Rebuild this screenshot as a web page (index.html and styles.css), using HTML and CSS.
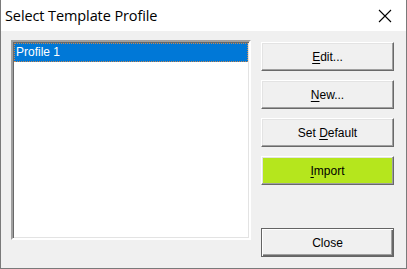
FILE: index.html
```html
<!DOCTYPE html>
<html>
<head>
<meta charset="utf-8">
<link rel="stylesheet" href="styles.css">
</head>
<body>
<div class="window">
  <div class="titlebar">
    <span class="title">Select Template Profile</span>
    <svg class="close-x" width="14" height="14" viewBox="0 0 14 14"><path d="M1 1 L13 13 M13 1 L1 13" stroke="#000" stroke-width="1.1" fill="none"/></svg>
  </div>
  <div class="client">
    <div class="listbox">
      <div class="item selected">Profile 1</div>
    </div>
    <div class="buttons">
      <button class="btn"><u>E</u>dit...</button>
      <button class="btn"><u>N</u>ew...</button>
      <button class="btn">Set <u>D</u>efault</button>
      <button class="btn import"><u>I</u>mport</button>
      <button class="btn default close">Close</button>
    </div>
  </div>
</div>
</body>
</html>
```
FILE: styles.css
```css
html, body {
  margin: 0;
  padding: 0;
  background: #f0f0f0;
}
.window {
  width: 407px;
  height: 269px;
  box-sizing: border-box;
  border: 1px solid #7a7a7a;
  border-top: none;
  background: #f0f0f0;
  display: flex;
  flex-direction: column;
}
.titlebar {
  height: 31px;
  background: #fff;
  display: flex;
  align-items: center;
  justify-content: space-between;
  padding: 0 14px 0 4px;
  flex: none;
}
.title {
  font-family: "Open Sans", "Noto Sans", sans-serif;
  font-size: 14.5px;
  color: #000;
  letter-spacing: -0.1px;
  margin-top: -1px;
}
.close-x {
  display: block;
  margin-top: 1px;
}
.client {
  display: flex;
  padding: 9px 11px 0 10px;
  gap: 10px;
}
.listbox {
  width: 240px;
  height: 200px;
  box-sizing: border-box;
  background: #fff;
  border-style: solid;
  border-width: 2px;
  border-color: #a0a0a0 #fff #fff #a0a0a0;
  box-shadow: inset 1px 1px 0 #696969, inset -1px -1px 0 #e3e3e3;
  padding: 1px;
}
.item {
  height: 19px;
  box-sizing: border-box;
  font-family: "Liberation Sans", Arial, sans-serif;
  font-size: 12px;
  line-height: 17px;
  padding-left: 1px;
}
.item.selected {
  background: #0078d7;
  color: #fff;
  border: 1px dotted #c88850;
}
.buttons {
  display: flex;
  flex-direction: column;
  gap: 9px;
  padding-top: 2px;
  height: 217px;
  box-sizing: border-box;
  width: 133px;
}
.btn {
  height: 29px;
  width: 133px;
  box-sizing: border-box;
  margin: 0;
  padding: 0;
  font-family: "Liberation Sans", Arial, sans-serif;
  font-size: 12px;
  color: #000;
  background: #f0f0f0;
  border-style: solid;
  border-width: 1px;
  border-color: #fff #696969 #696969 #fff;
  box-shadow: inset -1px -1px 0 #a0a0a0, inset 1px 1px 0 #e3e3e3;
  text-align: center;
}
.btn u {
  text-decoration-thickness: 1px;
  text-underline-offset: 2px;
}
.import {
  background: #b5e61d;
}
.close {
  margin-top: auto;
}
.default {
  border: 1px solid #646464;
  box-shadow: inset 1px 1px 0 #fff, inset -1px -1px 0 #696969, inset -2px -2px 0 #a0a0a0;
}
```
